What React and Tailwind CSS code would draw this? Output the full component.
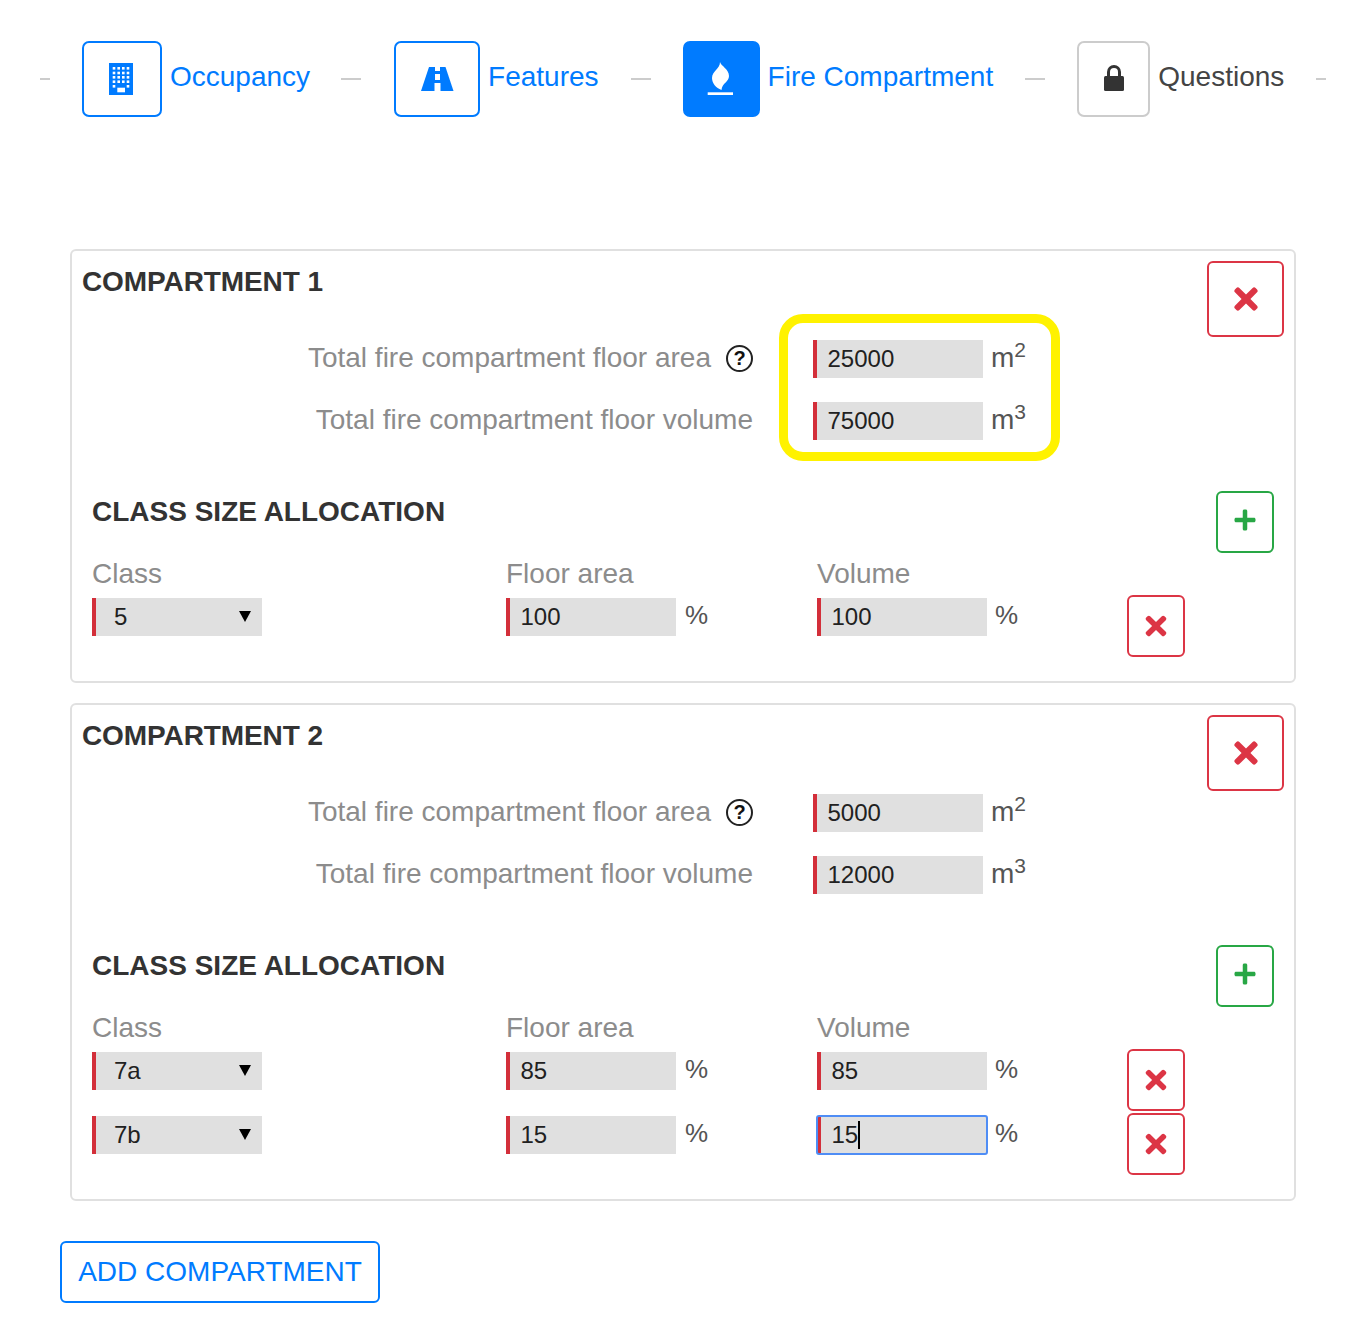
import React from "react";
import { FaTimes, FaPlus } from "react-icons/fa";

const F = { fontFamily: '"Liberation Sans", Arial, sans-serif' };

const BuildingIcon = () => {
  const xs = [14, 18.7, 23.3, 28];
  const ys = [13.3, 18, 22.3, 26.7];
  const cells = [];
  ys.forEach((y) => xs.forEach((x) => cells.push([x, y])));
  cells.push([14, 31.3], [28, 31.3]);
  return (
    <svg width="44" height="48" viewBox="0 0 44 48">
      <rect x="9" y="8" width="24" height="32" fill="#007bff" />
      {cells.map(([x, y], i) => (
        <rect key={i} x={x - 1.3} y={y - 1.3} width="2.6" height="2.6" fill="#fff" />
      ))}
      <rect x="17.3" y="32.7" width="7.7" height="4.6" fill="#fff" />
    </svg>
  );
};
const RoadIcon = () => (
  <svg width="44" height="48" viewBox="0 0 44 48">
    <polygon points="14,12 30.5,12 38.5,36 6,36" fill="#007bff" />
    <rect x="20" y="12" width="5" height="4" fill="#fff" />
    <rect x="20" y="19" width="5" height="6" fill="#fff" />
    <rect x="19.5" y="28" width="6" height="8" fill="#fff" />
  </svg>
);
const FlameIcon = () => (
  <svg width="44" height="48" viewBox="0 0 44 48" fill="#fff">
    <path d="M21 7C22 11 30 14 30 21C30 27 23 28 22.5 35C17 33 13 28 13 23C13 16 21 14 21 7Z" />
    <rect x="8.7" y="37.3" width="25.3" height="2.7" />
  </svg>
);
const LockIcon = () => (
  <svg width="44" height="48" viewBox="0 0 44 48">
    <path d="M16.5 22V17a5.5 5.5 0 0 1 11 0V22" fill="none" stroke="#333" strokeWidth="3" />
    <rect x="12" y="21" width="20" height="15" rx="1.5" fill="#333" />
  </svg>
);

function XBtn({ big }) {
  return (
    <button className={`flex items-center justify-center border-2 border-[#dc3545] rounded-[6px] bg-white text-[#dc3545] ${big ? "w-[77px] h-[76px]" : "w-[58px] h-[62px]"}`}>
      <FaTimes size={big ? 34 : 30} />
    </button>
  );
}
function PlusBtn() {
  return (
    <button className="flex items-center justify-center w-[58px] h-[62px] pb-[4px] border-2 border-[#28a745] rounded-[6px] bg-white text-[#28a745]">
      <FaPlus size={24} />
    </button>
  );
}
function Field({ value, w = "w-[170px]", caret, focus }) {
  return (
    <div className={`relative ${w} h-[38px] bg-[#e0e0e0] border-l-4 border-[#d32f3a] flex items-center pl-[10.5px] text-[24px] text-[#212121] ${focus ? "outline-2 outline-[#4f8df5] -outline-offset-1 rounded-[2px]" : ""}`}>
      {value}
      {caret && <span className="inline-block w-[2px] h-[28px] bg-black" />}
    </div>
  );
}
function Sup({ base, n }) {
  return (
    <span className="text-[28px] text-[#555] ml-2 mb-[2px] leading-none">
      {base}
      <sup className="text-[21px]">{n}</sup>
    </span>
  );
}
function Pct({ tight }) {
  return <span className={`text-[26px] text-[#555] mb-[4px] leading-none ${tight ? "ml-[8px]" : "ml-[9px]"}`}>%</span>;
}
function Help() {
  return (
    <span className="flex items-center justify-center w-[27px] h-[27px] rounded-full border-2 border-[#222] ml-[15px] text-[#111] text-[20px] font-bold leading-none">
      ?
    </span>
  );
}
function ClassRow({ cls, fa, vol, focus }) {
  return (
    <div className="flex items-start h-[64px]">
      <div className="w-[414px]">
        <div className="relative w-[170px] h-[38px] bg-[#e0e0e0] border-l-4 border-[#d32f3a] flex items-center pl-[18px] text-[24px] text-[#212121]">
          {cls}
          <svg className="absolute right-[11px] top-[13px]" width="12" height="11" viewBox="0 0 12 11">
            <polygon points="0,0 12,0 6,11" fill="#000" />
          </svg>
        </div>
      </div>
      <div className="w-[311px] flex items-center">
        <Field value={fa} />
        <Pct />
      </div>
      <div className="w-[310px] flex items-center">
        <Field value={vol} caret={focus} focus={focus} />
        <Pct tight />
      </div>
      <div className="-mt-[3px]">
        <XBtn />
      </div>
    </div>
  );
}
function Compartment({ n, a, v, rows, highlight }) {
  return (
    <section className="relative border-2 border-[#e0e0e0] rounded-[6px] w-[1226px] ml-[70px] pt-[10px] px-[10px] pb-[19px] bg-white">
      <div className="flex justify-between items-start">
        <h2 className="text-[28px] font-bold text-[#333] leading-[40px] mt-[1px] tracking-[-0.1px]">COMPARTMENT {n}</h2>
        <XBtn big />
      </div>
      <div className="relative mt-[3px]">
        {highlight && (
          <div className="absolute left-[697px] -top-[26px] w-[281px] h-[147px] border-[9px] border-[#fff200] rounded-[24px]" />
        )}
        <div className="flex items-center h-[38px]">
          <div className="w-[671px] mb-[2px] flex justify-end items-center text-[28px] text-[#8c8c8c]">
            Total fire compartment floor area
            <Help />
          </div>
          <div className="ml-[60px]"><Field value={a} /></div>
          <Sup base="m" n="2" />
        </div>
        <div className="flex items-center h-[38px] mt-[24px]">
          <div className="w-[671px] mb-[2px] text-right text-[28px] text-[#8c8c8c]">Total fire compartment floor volume</div>
          <div className="ml-[60px]"><Field value={v} /></div>
          <Sup base="m" n="3" />
        </div>
      </div>
      <div className="flex justify-between items-start mt-[51px] pl-[10px] pr-[10px]">
        <h3 className="text-[28px] font-bold text-[#333] leading-[40px] mt-[1px]">CLASS SIZE ALLOCATION</h3>
        <PlusBtn />
      </div>
      <div className="pl-[10px] mt-[2px]">
        <div className="flex text-[28px] text-[#8c8c8c] leading-[38px] mb-[5px]">
          <div className="w-[414px]">Class</div>
          <div className="w-[311px]">Floor area</div>
          <div>Volume</div>
        </div>
        {rows.map((r, i) => (
          <ClassRow key={i} {...r} />
        ))}
      </div>
    </section>
  );
}
function Step({ icon, label, boxW, solid, locked, ml }) {
  return (
    <div className={`flex items-center ${ml}`}>
      <div className={`flex items-center justify-center h-[76px] ${boxW} rounded-[7px] border-2 ${locked ? "border-[#cccccc]" : solid ? "border-[#007bff] bg-[#007bff]" : "border-[#007bff]"}`}>
        {icon}
      </div>
      <span className={`text-[28px] ml-2 mb-[4px] ${locked ? "text-[#444]" : "text-[#007bff]"}`}>{label}</span>
    </div>
  );
}
const Dash = ({ ml = "", w = "w-[20px]" }) => <span className={`block ${w} h-[2px] bg-[#cccccc] ${ml}`} />;

export default function App() {
  return (
    <div style={F} className="w-[1350px] h-[1324px] bg-white overflow-hidden">
      <div className="flex items-center pt-[41px] pl-[40px] h-[117px]">
        <Dash w="w-[10px]" />
        <Step ml="ml-[32px]" boxW="w-[80px]" label="Occupancy" icon={<BuildingIcon />} />
        <Dash ml="ml-[31px]" />
        <Step ml="ml-[33px]" boxW="w-[86px]" label="Features" icon={<RoadIcon />} />
        <Dash ml="ml-[32px]" />
        <Step ml="ml-[32px]" boxW="w-[77px]" solid label="Fire Compartment" icon={<FlameIcon />} />
        <Dash ml="ml-[32px]" />
        <Step ml="ml-[32px]" boxW="w-[73px]" locked label="Questions" icon={<LockIcon />} />
        <Dash w="w-[10px]" ml="ml-[32px]" />
      </div>
      <div className="mt-[132px] flex flex-col gap-[20px]">
        <Compartment n={1} a="25000" v="75000" highlight rows={[{ cls: "5", fa: "100", vol: "100" }]} />
        <Compartment n={2} a="5000" v="12000" rows={[{ cls: "7a", fa: "85", vol: "85" }, { cls: "7b", fa: "15", vol: "15", focus: true }]} />
      </div>
      <button className="ml-[60px] mt-[40px] h-[62px] w-[320px] border-2 border-[#007bff] rounded-[6px] text-[#007bff] text-[28px] bg-white">ADD COMPARTMENT</button>
    </div>
  );
}
